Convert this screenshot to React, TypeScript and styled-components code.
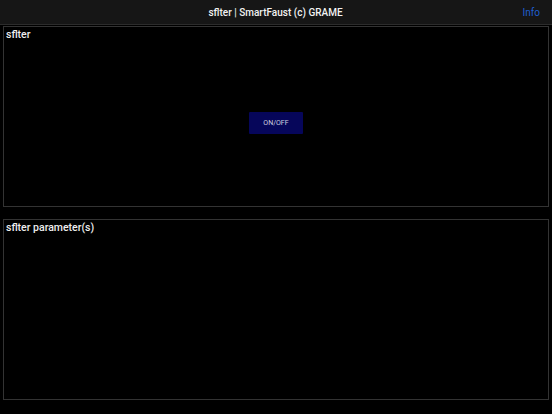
import React from "react";
import styled, { createGlobalStyle } from "styled-components";

const Global = createGlobalStyle`
  html, body { margin: 0; padding: 0; background: #000; }
  body { font-family: Roboto, "Noto Sans", sans-serif; color: #fff; }
`;

const Page = styled.div`
  width: 552px;
  height: 414px;
  background: #000;
  display: flex;
  flex-direction: column;
  overflow: hidden;
`;

const Header = styled.header`
  height: 24px;
  flex: 0 0 24px;
  background: #161616;
  border-bottom: 1px solid #2c2c2c;
  display: grid;
  grid-template-columns: 1fr auto 1fr;
  align-items: center;
  padding: 0 12px 0 11px;
`;

const Title = styled.div`
  grid-column: 2;
  font-size: 10px;
  font-weight: 500;
  color: #f2f2f2;
  padding-top: 1px;
`;

const InfoLink = styled.a`
  grid-column: 3;
  justify-self: end;
  font-size: 10px;
  color: #1f5fd0;
  text-decoration: none;
  padding-top: 1px;
`;

const Body = styled.div`
  flex: 1;
  display: flex;
  flex-direction: column;
  gap: 12px;
  padding: 1px 3px 15px 3px;
`;

const Panel = styled.section`
  flex: 0 0 181px;
  box-sizing: border-box;
  border: 1px solid #333;
  display: flex;
  flex-direction: column;
`;

const PanelTitle = styled.div`
  font-size: 10.5px;
  font-weight: 500;
  color: #eee;
  padding: 1px 0 0 2px;
  line-height: 13px;
`;

const PanelContent = styled.div`
  flex: 1;
  display: flex;
  align-items: center;
  justify-content: center;
`;

const ToggleButton = styled.button`
  width: 54px;
  height: 22px;
  border: none;
  border-radius: 1px;
  background: #06065a;
  color: #d0d0e0;
  font-family: Roboto, "Noto Sans", sans-serif;
  font-size: 7px;
  font-weight: 400;
  padding: 0;
  margin-bottom: 2px;
`;

export default function App() {
  return (
    <Page>
      <Global />
      <Header>
        <Title>sflter | SmartFaust (c) GRAME</Title>
        <InfoLink>Info</InfoLink>
      </Header>
      <Body>
        <Panel>
          <PanelTitle>sflter</PanelTitle>
          <PanelContent>
            <ToggleButton>ON/OFF</ToggleButton>
          </PanelContent>
        </Panel>
        <Panel>
          <PanelTitle>sflter parameter(s)</PanelTitle>
          <PanelContent />
        </Panel>
      </Body>
    </Page>
  );
}
